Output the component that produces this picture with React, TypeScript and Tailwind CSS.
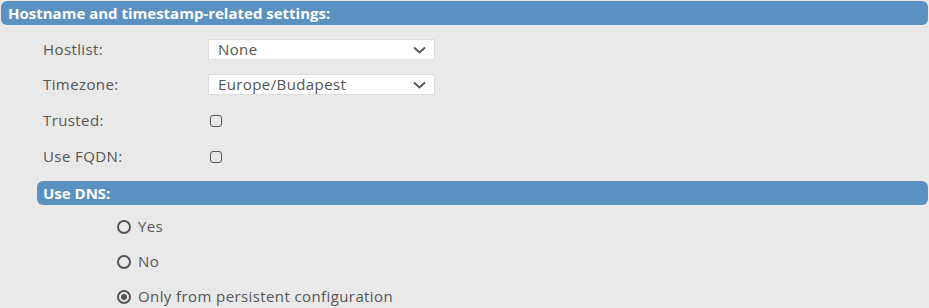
export default function App() {
  const font = { fontFamily: '"Open Sans", "Liberation Sans", sans-serif' };
  return (
    <div className="w-[929px] h-[308px] bg-[#e9e9e9] text-[#555555] text-[15px] tracking-[0.4px] overflow-hidden pt-px pr-px" style={font}>
      {/* Section header */}
      <div className="ml-px h-6 rounded-md bg-[#5a91c0] text-white font-bold text-[15px] tracking-normal leading-6 pl-[7px]">
        Hostname and timestamp-related settings:
      </div>

      <div className="pl-[43px]">
        <div className="flex items-center h-[21px] mt-[14px]">
          <div className="w-[165px]">Hostlist:</div>
          <div className="flex items-center justify-between w-[227px] h-[21px] bg-white border border-[#dddddd] pl-[9px] pr-[8px]">
            <span>None</span>
            <Chevron />
          </div>
        </div>
        <div className="flex items-center h-[21px] mt-[14px]">
          <div className="w-[165px]">Timezone:</div>
          <div className="flex items-center justify-between w-[227px] h-[21px] bg-white border border-[#dddddd] pl-[9px] pr-[8px]">
            <span>Europe/Budapest</span>
            <Chevron />
          </div>
        </div>
        <div className="flex items-center h-[21px] mt-[15px]">
          <div className="w-[167px]">Trusted:</div>
          <Checkbox />
        </div>
        <div className="flex items-center h-[21px] mt-[15px]">
          <div className="w-[167px]">Use FQDN:</div>
          <Checkbox />
        </div>
      </div>

      <div className="ml-[37px] mt-[14px] h-6 rounded-md bg-[#5a91c0] text-white font-bold text-[15px] tracking-normal leading-6 pl-[6px]">
        Use DNS:
      </div>

      <div className="pl-[117px] pt-[11px] flex flex-col gap-[14px]">
        <Radio label="Yes" />
        <Radio label="No" />
        <Radio label="Only from persistent configuration" checked />
      </div>
    </div>
  );
}

function Chevron() {
  return (
    <svg width="13" height="8" viewBox="0 0 13 8" fill="none">
      <path d="M1 1.5L6.5 6.5L12 1.5" stroke="#555555" strokeWidth="1.8" />
    </svg>
  );
}

function Checkbox() {
  return <div className="w-[12px] h-[12px] rounded-[3px] border-[1.5px] border-[#555555]" />;
}

function Radio({ label, checked }: { label: string; checked?: boolean }) {
  return (
    <div className="flex items-center h-[21px] gap-[7px]">
      <div className="w-[14px] h-[14px] rounded-full border-2 border-[#555555] flex items-center justify-center">
        {checked && <div className="w-[6px] h-[6px] rounded-full bg-[#555555]" />}
      </div>
      <span>{label}</span>
    </div>
  );
}
